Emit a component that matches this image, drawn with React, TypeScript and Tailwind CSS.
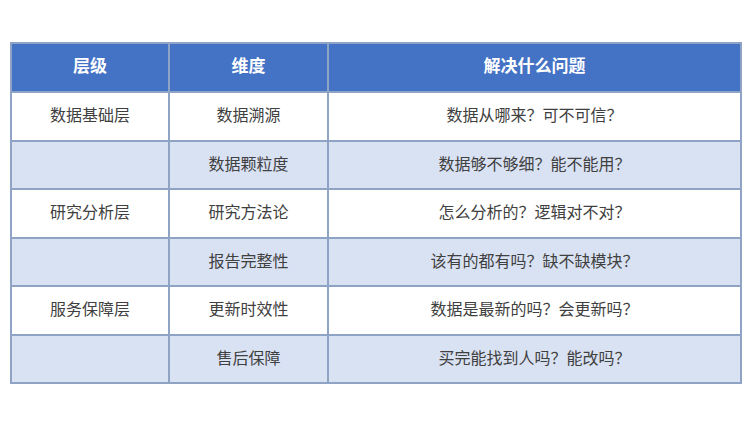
import React from 'react';

const rows = [
  { layer: '数据基础层', dim: '数据溯源', q: '数据从哪来？可不可信？' },
  { layer: '', dim: '数据颗粒度', q: '数据够不够细？能不能用？' },
  { layer: '研究分析层', dim: '研究方法论', q: '怎么分析的？逻辑对不对？' },
  { layer: '', dim: '报告完整性', q: '该有的都有吗？缺不缺模块？' },
  { layer: '服务保障层', dim: '更新时效性', q: '数据是最新的吗？会更新吗？' },
  { layer: '', dim: '售后保障', q: '买完能找到人吗？能改吗？' },
];

export default function App() {
  return (
    <div
      className="w-[750px] h-[426px] bg-white pt-[42px] pl-[10px]"
      style={{ fontFamily: '"Noto Sans CJK SC", "Noto Sans", sans-serif' }}
    >
      <table className="border-collapse w-[730px] table-fixed">
        <colgroup>
          <col className="w-[158px]" />
          <col className="w-[159px]" />
          <col className="w-[413px]" />
        </colgroup>
        <thead>
          <tr className="h-[49px] bg-[#4472c4] text-white text-[17px] font-bold">
            <th className="border-2 border-[#8fa3c4] pb-[5px]">层级</th>
            <th className="border-2 border-[#8fa3c4] pb-[5px]">维度</th>
            <th className="border-2 border-[#8fa3c4] pb-[5px]">解决什么问题</th>
          </tr>
        </thead>
        <tbody>
          {rows.map((r, i) => (
            <tr
              key={i}
              className={`h-[48.5px] text-[16px] text-[#404040] ${i % 2 === 0 ? 'bg-white' : 'bg-[#d9e2f3]'}`}
            >
              <td className="border-2 border-[#8fa3c4] text-center pb-[4px]">{r.layer}</td>
              <td className="border-2 border-[#8fa3c4] text-center pb-[4px]">{r.dim}</td>
              <td className="border-2 border-[#8fa3c4] text-center pb-[4px]">{r.q}</td>
            </tr>
          ))}
        </tbody>
      </table>
    </div>
  );
}
